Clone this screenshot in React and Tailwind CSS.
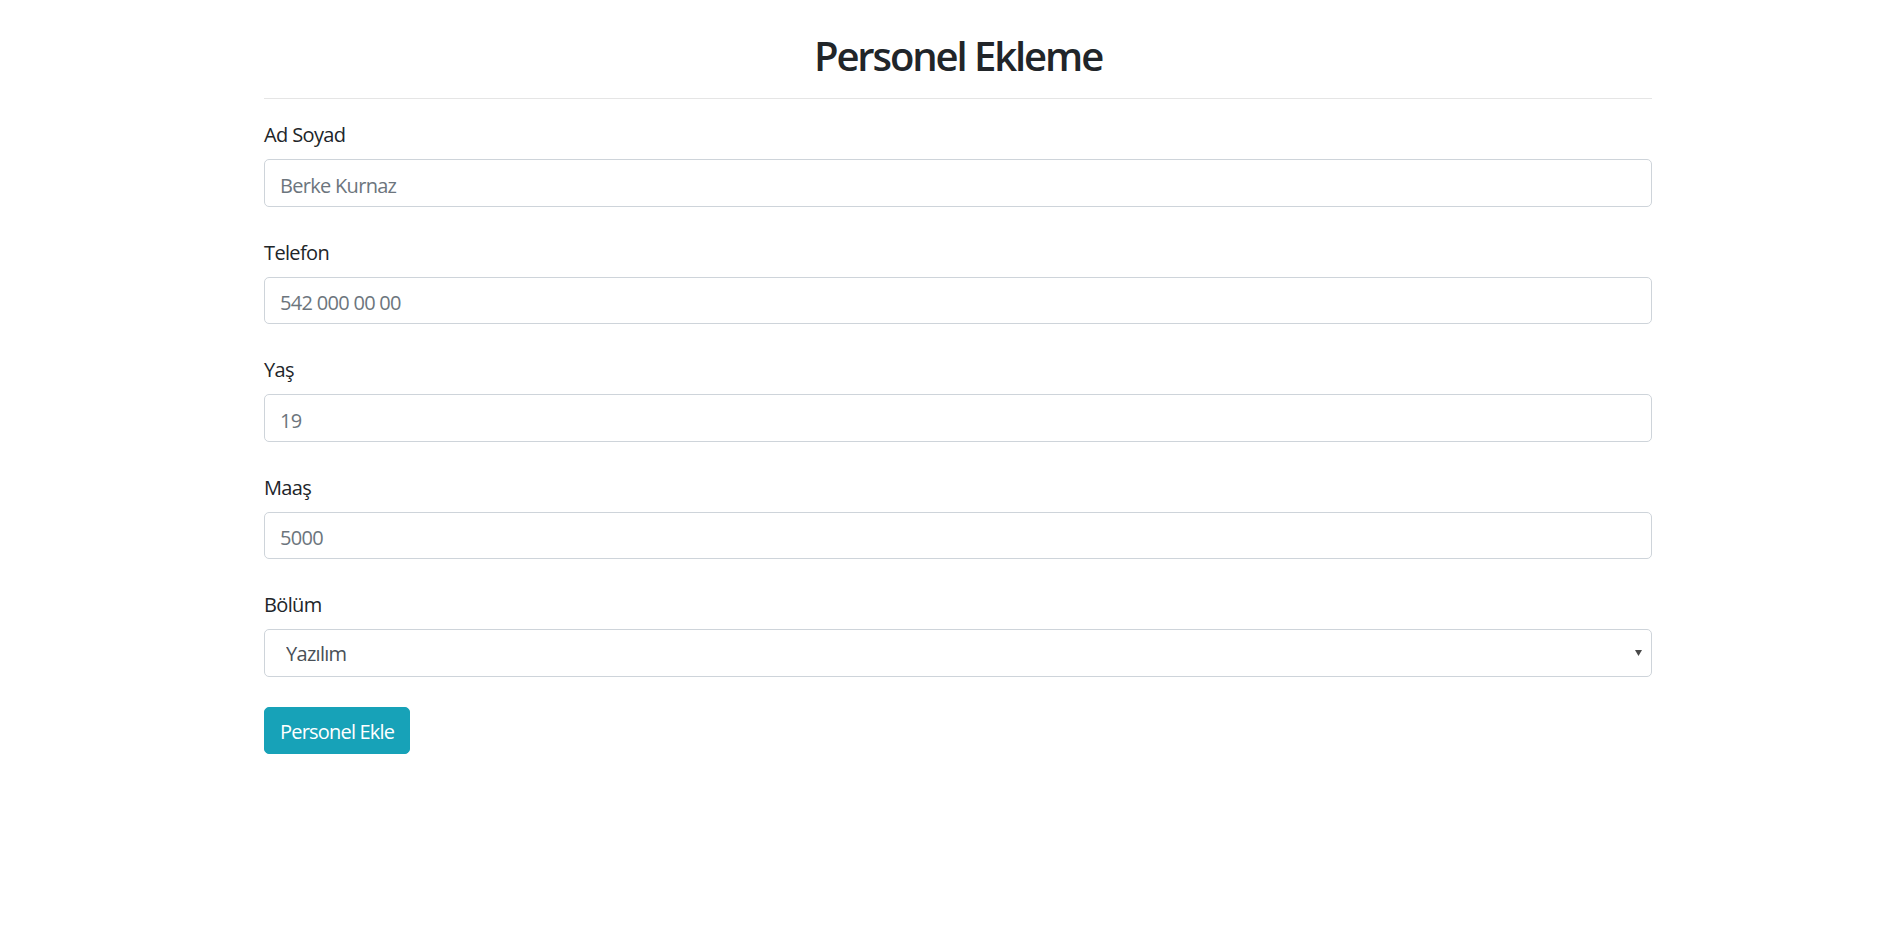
import React from "react";

const fields = [
  { label: "Ad Soyad", placeholder: "Berke Kurnaz" },
  { label: "Telefon", placeholder: "542 000 00 00" },
  { label: "Yaş", placeholder: "19" },
  { label: "Maaş", placeholder: "5000" },
];

export default function App() {
  return (
    <div
      className="min-h-screen bg-white text-[#212529] tracking-[-0.04em]"
      style={{ fontFamily: '"Open Sans", "Noto Sans", sans-serif' }}
    >
      <div className="ml-[264px] w-[1388px] pt-[32px]">
        <h2 className="text-center text-[40px] leading-[48px] font-semibold tracking-[-0.052em]">
          Personel Ekleme
        </h2>
        <hr className="mt-[18px] mb-[20px] border-0 border-t border-[#e5e5e5]" />

        <form onSubmit={(e) => e.preventDefault()}>
          {fields.map((f) => (
            <div key={f.label} className="mb-[30px]">
              <label className="mb-[9px] block pt-[1px] text-[20px] leading-[30px]">
                {f.label}
              </label>
              <input
                type="text"
                placeholder={f.placeholder}
                className="block h-[47.5px] w-full rounded-[5px] border border-[#ced4da] px-[15px] pt-[10px] pb-[5px] text-[20px] leading-[30px] tracking-[-0.035em] text-[#495057] outline-none placeholder:text-[#6c757d]"
              />
            </div>
          ))}

          <div className="mb-[30px]">
            <label className="mb-[9px] block pt-[1px] text-[20px] leading-[30px]">
              Bölüm
            </label>
            <div className="relative">
              <select
                defaultValue="Yazılım"
                className="block h-[47.5px] w-full appearance-none rounded-[5px] border border-[#ced4da] bg-white pl-[21px] pr-[30px] pt-[3px] text-[20px] leading-[30px] tracking-[-0.035em] text-[#495057] outline-none"
              >
                <option>Yazılım</option>
                <option>Muhasebe</option>
                <option>Pazarlama</option>
              </select>
              <svg
                className="pointer-events-none absolute right-[10px] top-1/2 -translate-y-1/2"
                width="7"
                height="6"
                viewBox="0 0 7 6"
              >
                <path d="M0 0 H7 L3.5 6 Z" fill="#4a4a4a" />
              </svg>
            </div>
          </div>

          <button
            type="submit"
            className="rounded-[5px] border border-[#17a2b8] bg-[#17a2b8] px-[15px] pt-[9px] pb-[6px] text-[20px] leading-[30px] tracking-[-0.04em] text-white"
          >
            Personel Ekle
          </button>
        </form>
      </div>
    </div>
  );
}
